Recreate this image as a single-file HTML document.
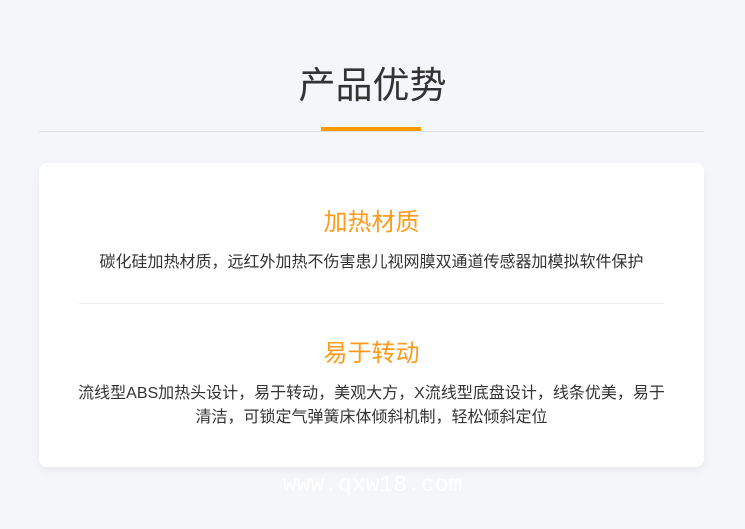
<!DOCTYPE html>
<html><head><meta charset="utf-8"><style>
body{margin:0;width:745px;height:529px;background:#f5f6fa;font-family:"Liberation Sans","Noto Sans CJK SC",sans-serif;position:relative;overflow:hidden}
.t{position:absolute;top:62px;left:0;width:745px;text-align:center;font-size:37px;color:#333;line-height:48px}
.ln{position:absolute;top:131px;left:39px;width:665px;height:1px;background:#dfe0e6}
.bar{position:absolute;top:127px;left:321px;width:100px;height:4px;background:#ff9a00}
.card{position:absolute;top:163px;left:39px;width:665px;height:304px;background:#fff;border-radius:8px;box-shadow:0 4px 10px rgba(0,0,0,.05)}
.h{position:absolute;left:0;width:665px;text-align:center;color:#ff9a1a;font-size:24px;line-height:32px}
.p{position:absolute;left:22px;width:621px;text-align:center;color:#333;font-size:16px;line-height:24px}
.dv{position:absolute;top:140px;left:40px;width:585px;height:1px;background:#eee}
.wm{position:absolute;top:471px;left:0;width:745px;text-align:center;color:#fff;font-family:"Liberation Mono",monospace;font-size:23px;line-height:28px}
</style></head><body>
<div class="t">产品优势</div>
<div class="ln"></div><div class="bar"></div>
<div class="card">
<div class="h" style="top:44px">加热材质</div>
<div class="p" style="top:88px">碳化硅加热材质，远红外加热不伤害患儿视网膜双通道传感器加模拟软件保护</div>
<div class="dv"></div>
<div class="h" style="top:175px">易于转动</div>
<div class="p" style="top:219px">流线型ABS加热头设计，易于转动，美观大方，X流线型底盘设计，线条优美，易于<br>清洁，可锁定气弹簧床体倾斜机制，轻松倾斜定位</div>
</div>
<div class="wm">www.qxw18.com</div>
</body></html>
